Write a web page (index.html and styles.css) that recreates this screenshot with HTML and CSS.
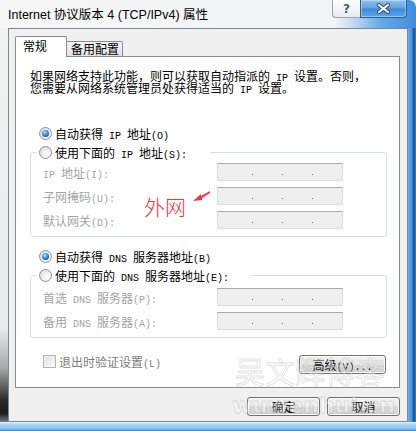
FILE: index.html
```html
<!DOCTYPE html>
<html lang="zh-CN">
<head>
<meta charset="utf-8">
<title>Internet 协议版本 4 (TCP/IPv4) 属性</title>
<link rel="stylesheet" href="styles.css">
</head>
<body>
<div class="window">
  <div class="titlebar">
    <span class="title">Internet 协议版本 4 (TCP/IPv4) 属性</span>
    <div class="caption">
      <div class="cbtn help">?</div>
      <div class="cbtn close">
        <svg width="13" height="11" viewBox="0 0 13 11"><path d="M2 2 L11 9 M11 2 L2 9" stroke="#2b4566" stroke-width="4" stroke-linecap="square" fill="none"/><path d="M2 2 L11 9 M11 2 L2 9" stroke="#fff" stroke-width="2" stroke-linecap="square" fill="none"/></svg>
      </div>
    </div>
  </div>
  <div class="frame-left"></div>
  <div class="client">
    <div class="tabs">
      <div class="tab active">常规</div>
      <div class="tab inactive">备用配置</div>
    </div>
    <div class="panel">
      <p class="intro">如果网络支持此功能，则可以获取自动指派的<span class="en"> IP </span>设置。否则，<br>您需要从网络系统管理员处获得适当的<span class="en"> IP </span>设置。</p>
      <div class="option first"><span class="radio on"></span><span>自动获得<span class="en"> IP </span>地址<span class="en">(O)</span></span></div>
      <div class="group ip">
        <div class="legend"><span class="radio"></span><span>使用下面的<span class="en"> IP </span>地址<span class="en">(S):</span></span></div>
        <div class="row"><span><span class="en">IP </span>地址<span class="en">(I):</span></span><span class="ipbox"><i></i><i></i><i></i></span></div>
        <div class="row"><span>子网掩码<span class="en">(U):</span></span><span class="ipbox"><i></i><i></i><i></i></span></div>
        <div class="row"><span>默认网关<span class="en">(D):</span></span><span class="ipbox"><i></i><i></i><i></i></span></div>
      </div>
      <div class="option dns-auto"><span class="radio on"></span><span>自动获得<span class="en"> DNS </span>服务器地址<span class="en">(B)</span></span></div>
      <div class="group dns">
        <div class="legend"><span class="radio"></span><span>使用下面的<span class="en"> DNS </span>服务器地址<span class="en">(E):</span></span></div>
        <div class="row"><span>首选<span class="en"> DNS </span>服务器<span class="en">(P):</span></span><span class="ipbox"><i></i><i></i><i></i></span></div>
        <div class="row"><span>备用<span class="en"> DNS </span>服务器<span class="en">(A):</span></span><span class="ipbox"><i></i><i></i><i></i></span></div>
      </div>
      <div class="bottom-row">
        <div class="check"><span class="box"></span><span>退出时验证设置<span class="en">(L)</span></span></div>
        <button class="btn adv">高级<span class="en">(V)...</span></button>
      </div>
      <div class="note">外网</div>
      <svg class="arrow" width="18" height="11" viewBox="0 0 18 11"><polygon points="0,10 8,3 8,5 17,0 17,2 9,7 9,9" fill="#f2343c"/></svg>
    </div>
    <div class="actions">
      <button class="btn">确定</button>
      <button class="btn">取消</button>
    </div>
  </div>
  <div class="frame-right"></div>
  <div class="frame-bottom"></div>
  <div class="watermark">
    <span class="wm-cn">吴文辉博客</span>
    <span class="wm-en">wuwenhui.cn</span>
  </div>
</div>
</body>
</html>
```

FILE: styles.css
```css
* { box-sizing: border-box; }
html, body { margin: 0; padding: 0; }
body {
  width: 416px;
  height: 431px;
  overflow: hidden;
  background: #fff;
  font-family: "Noto Sans CJK SC", "Liberation Mono", sans-serif;
  font-size: 12px;
  color: #000;
}
.en {
  font-family: "Liberation Mono", monospace;
  font-size: 10px;
  line-height: 0;
}

.window {
  position: relative;
  width: 416px;
  height: 431px;
  display: grid;
  grid-template-columns: 8px 400px 8px;
  grid-template-rows: 28px 394px 9px;
}

/* title bar */
.titlebar {
  grid-column: 1 / 4;
  display: flex;
  align-items: flex-start;
  background: linear-gradient(to right, #f6f6f6 0, #f1f3f5 335px, #c4dcf2 352px, #6aaae6 380px, #3e8ce0 416px);
  border-top-right-radius: 7px;
}
.title {
  font-family: "Liberation Sans", "Noto Sans CJK SC", sans-serif;
  font-size: 12.5px;
  line-height: 18px;
  margin: 6px 0 0 8px;
  white-space: nowrap;
}
.caption {
  margin-left: auto;
  margin-right: 9px;
  display: flex;
}
.cbtn {
  height: 18px;
  display: flex;
  align-items: center;
  justify-content: center;
}
.help {
  width: 28px;
  border: 1px solid #97a3b0;
  border-top: none;
  border-right: none;
  border-bottom-left-radius: 4px;
  background: linear-gradient(#fdfdfd, #e9edf1);
  font-family: "DejaVu Sans", sans-serif;
  font-weight: bold;
  font-size: 12px;
  color: #4a5a6c;
  text-shadow: 0 0 2px #fff;
}
.close {
  width: 47px;
  border: 1px solid #2c5c94;
  border-top: none;
  border-bottom-right-radius: 4px;
  background: linear-gradient(#8fc3f0 0, #5ea2e3 48%, #3d87d6 52%, #5aa8ec 100%);
  box-shadow: inset 0 0 0 1px rgba(255, 255, 255, 0.35);
}

/* frames */
.frame-left {
  background: linear-gradient(#f2f2f2 0, #e8eaec 300px, #a8a8a8 340px, #2c2c2c 372px, #1b1b1b 385px, #6c7c8c 394px);
}
.frame-right {
  background: linear-gradient(to right, #63b3f4 0, #3e91e2 4px, #2a6cb5 5px, #1d4a82 6px, #3a86d6 8px);
}
.frame-bottom {
  grid-column: 1 / 4;
  background: linear-gradient(#eef7fd 0, #b0d9f5 2px, #93c9f1 6px, #5ea4e4 8px, #3e7fc4 9px);
}

/* client */
.client {
  background: #f0f0f0;
  border: 1px solid #7c8793;
  padding: 7px 7px 0 6px;
  display: flex;
  flex-direction: column;
}

.tabs {
  display: flex;
  align-items: flex-end;
  height: 20px;
  font-size: 12px;
}
.tab {
  border: 1px solid #898c95;
  border-bottom: none;
  border-radius: 2px 2px 0 0;
  line-height: 14px;
  white-space: nowrap;
}
.tab.active {
  width: 52px;
  height: 21px;
  margin-bottom: -1px;
  padding: 2px 0 0 7px;
  background: #fff;
  position: relative;
  z-index: 1;
}
.tab.inactive {
  width: 57px;
  height: 15px;
  margin-left: -1px;
  padding-left: 4px;
  background: linear-gradient(#f4f4f4, #e2e2e2);
}

.panel {
  position: relative;
  height: 332px;
  background: #fff;
  border: 1px solid #898c95;
}

.intro {
  margin: 13px 0 0 14px;
  height: 24px;
  line-height: 12px;
  white-space: nowrap;
}

.radio {
  flex: none;
  width: 13px;
  height: 13px;
  border-radius: 50%;
  border: 1px solid #8e8f8f;
  background: radial-gradient(circle at 65% 65%, #ffffff 0, #eeeeee 45%, #d2d2d2 100%);
  display: flex;
  align-items: center;
  justify-content: center;
}
.radio.on::after {
  content: "";
  width: 7px;
  height: 7px;
  border-radius: 50%;
  background: radial-gradient(circle at 40% 35%, #b6e6ff 0, #3a98e0 40%, #14589a 75%, #0c3868 100%);
}

.option {
  display: flex;
  align-items: center;
  gap: 3px;
  height: 16px;
  margin-left: 23px;
  white-space: nowrap;
}
.option.first { margin-top: 31px; }
.option.dns-auto { margin-top: 11px; }

.group {
  margin: 11px 0 0 14px;
  width: 357px;
  border: 1px solid #d5dfe5;
  border-radius: 3px;
  padding: 0 0 7px 12px;
}
.legend {
  display: flex;
  align-items: center;
  gap: 3px;
  height: 17px;
  margin: -9px 0 0 -6px;
  padding-left: 2px;
  background: #fff;
  white-space: nowrap;
}
.group.ip .legend { width: 173px; }
.group.dns .legend { width: 214px; }

.row {
  display: grid;
  grid-template-columns: 174px 126px;
  align-items: center;
  height: 18px;
  margin-top: 6px;
  color: #a3a3a3;
  white-space: nowrap;
}
.group.ip .legend + .row { margin-top: 2px; }
.group.dns .legend + .row { margin-top: 4px; }

.ipbox {
  height: 18px;
  border: 1px solid #dadada;
  border-top-color: #ababab;
  background: #efefef;
  display: flex;
  align-items: flex-end;
  gap: 29px;
  padding: 0 0 5px 34px;
}
.ipbox i {
  width: 1px;
  height: 1px;
  background: #6a6a6a;
}

.bottom-row {
  display: flex;
  justify-content: space-between;
  align-items: flex-start;
  margin-top: 17px;
  padding: 0 13px 0 27px;
}
.check {
  display: flex;
  align-items: center;
  gap: 3px;
  height: 13px;
  color: #7d7d7d;
  white-space: nowrap;
}
.box {
  width: 13px;
  height: 13px;
  border: 1px solid #b4b4b4;
  background: linear-gradient(135deg, #e2e2e2, #f8f8f8);
  box-shadow: inset 0 0 0 1px #f3f3f3;
}

.btn {
  font: inherit;
  height: 19px;
  padding: 0;
  border: 1px solid #707070;
  border-radius: 3px;
  background: linear-gradient(#f2f2f2 0, #ebebeb 50%, #dddddd 50%, #cfcfcf 100%);
  box-shadow: inset 0 0 0 1px #fcfcfc;
  color: #000;
  line-height: 17px;
  white-space: nowrap;
}
.btn.adv { width: 87px; }

.actions {
  display: flex;
  justify-content: flex-end;
  gap: 7px;
  margin-top: 9px;
}
.actions .btn { width: 73px; }

/* annotation over the dialog */
.note {
  position: absolute;
  left: 128px;
  top: 137px;
  font-weight: 300;
  font-size: 21px;
  line-height: 24px;
  color: #f2343c;
}
.arrow {
  position: absolute;
  left: 177px;
  top: 134px;
}

/* watermark overlay */
.watermark {
  position: absolute;
  left: 0;
  top: 0;
  width: 416px;
  height: 431px;
  pointer-events: none;
}
.wm-cn, .wm-en {
  position: absolute;
  color: rgba(255, 255, 255, 0.4);
  -webkit-text-stroke: 1px rgba(120, 120, 120, 0.22);
  white-space: nowrap;
}
.wm-cn {
  left: 235px;
  top: 350px;
  font-size: 30px;
  line-height: 40px;
}
.wm-en {
  left: 232px;
  top: 392px;
  font-family: "DejaVu Sans", sans-serif;
  font-weight: bold;
  font-size: 22px;
  line-height: 28px;
}
```
